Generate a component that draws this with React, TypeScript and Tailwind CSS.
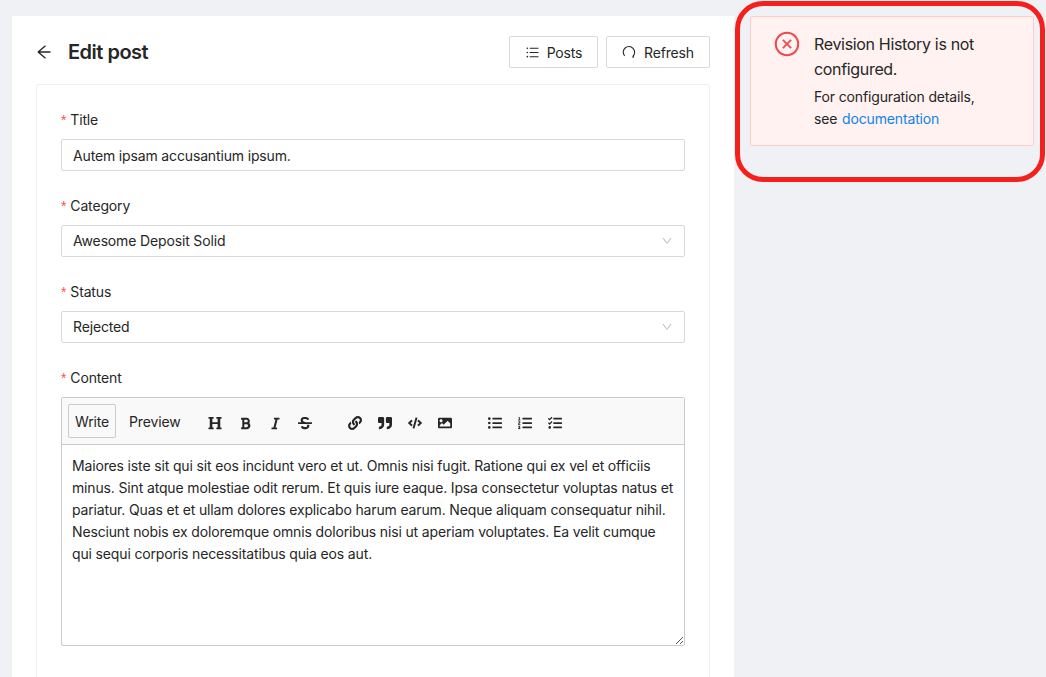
import { AiOutlineArrowLeft, AiOutlineUnorderedList, AiOutlineDown, AiOutlineCloseCircle } from "react-icons/ai";
import { FaHeading, FaBold, FaItalic, FaStrikethrough, FaLink, FaQuoteRight, FaCode, FaImage, FaListUl, FaListOl, FaTasks } from "react-icons/fa";

function Label({ text }: { text: string }) {
  return (
    <div className="h-[22px] mb-2 flex items-center text-[14px] leading-[22px] text-[#262626]">
      <span className="text-[#ff4d4f] mr-1 font-['Liberation_Sans'] text-[14px]">*</span>
      {text}
    </div>
  );
}

function Select({ value }: { value: string }) {
  return (
    <div className="h-8 border border-[#d9d9d9] rounded-[2px] pl-[11px] pr-[11px] flex items-center justify-between text-[14px] text-[#262626] mb-6">
      <span className="-mt-px">{value}</span>
      <AiOutlineDown className="text-[12px] text-[#bfbfbf]" />
    </div>
  );
}

function Tool({ children, className = "" }: { children: React.ReactNode; className?: string }) {
  return <span className={`w-[30px] flex items-center justify-center text-[#262626] ${className}`}>{children}</span>;
}

export default function App() {
  return (
    <div className="relative h-[677px] w-[1046px] overflow-hidden bg-[#f0f1f5] font-['Inter',sans-serif] tracking-[-0.15px] flex items-start pl-3 pt-4">
      <main className="w-[722px] h-[661px] bg-white px-6 pt-5 shrink-0">
        <header className="h-8 flex items-center justify-between mb-4">
          <div className="flex items-center">
            <AiOutlineArrowLeft className="text-[18px] text-[#262626] -ml-px mr-[15px]" />
            <h1 className="text-[20px] leading-8 font-semibold text-[#262626] tracking-[-0.5px]">Edit post</h1>
          </div>
          <div className="flex gap-2">
            <button className="h-8 w-[89px] border border-[#d9d9d9] rounded-[2px] flex items-center justify-center gap-[7px] text-[14px] text-[#262626]">
              <AiOutlineUnorderedList className="text-[15px]" />
              Posts
            </button>
            <button className="h-8 w-[104px] border border-[#d9d9d9] rounded-[2px] flex items-center justify-center gap-2 text-[14px] text-[#262626]">
              <svg width="14" height="14" viewBox="0 0 14 14" fill="none">
                <path d="M2.6 10.9 A 5.7 5.7 0 1 1 11 11.2" stroke="#262626" strokeWidth="1.1" />
                <path d="M9.6 12.4 L12.2 12.6 L11.6 10.2 Z" fill="#262626" />
              </svg>
              Refresh
            </button>
          </div>
        </header>
        <section className="h-[700px] border border-[#f0f0f0] rounded-[2px] p-6">
          <Label text="Title" />
          <div className="h-8 border border-[#d9d9d9] rounded-[2px] px-[11px] flex items-center text-[14px] text-[#262626] mb-6">
            Autem ipsam accusantium ipsum.
          </div>
          <Label text="Category" />
          <Select value="Awesome Deposit Solid" />
          <Label text="Status" />
          <Select value="Rejected" />
          <Label text="Content" />
          <div className="border border-[#c8ccd0] rounded-[2px]">
            <div className="h-[47px] bg-[#f9f9f9] border-b border-[#c8ccd0] flex items-center pl-[6px] text-[14px] text-[#262626]">
              <span className="h-[34px] w-[48px] border border-[#c8ccd0] rounded-[2px] flex items-center justify-center">Write</span>
              <span className="ml-[13px] w-[52px]">Preview</span>
              <div className="ml-[19px] flex items-center pt-[4px]">
                <Tool><FaHeading className="text-[14px]" /></Tool>
                <Tool><FaBold className="text-[13px]" /></Tool>
                <Tool><FaItalic className="text-[13px]" /></Tool>
                <Tool><FaStrikethrough className="text-[14px]" /></Tool>
              </div>
              <div className="ml-[20px] flex items-center pt-[4px]">
                <Tool><FaLink className="text-[14px]" /></Tool>
                <Tool><FaQuoteRight className="text-[14px]" /></Tool>
                <Tool><FaCode className="text-[14px]" /></Tool>
                <Tool><FaImage className="text-[14px]" /></Tool>
              </div>
              <div className="ml-[20px] flex items-center pt-[4px]">
                <Tool><FaListUl className="text-[14px]" /></Tool>
                <Tool><FaListOl className="text-[14px]" /></Tool>
                <Tool><FaTasks className="text-[14px]" /></Tool>
              </div>
            </div>
            <div className="relative h-[200px] px-[10px] py-[10px] text-[14px] leading-[22px] text-[#262626]">
              Maiores iste sit qui sit eos incidunt vero et ut. Omnis nisi fugit. Ratione qui ex vel et officiis minus. Sint atque molestiae odit rerum. Et quis iure eaque. Ipsa consectetur voluptas natus et pariatur. Quas et et ullam dolores explicabo harum earum. Neque aliquam consequatur nihil. Nesciunt nobis ex doloremque omnis doloribus nisi ut aperiam voluptates. Ea velit cumque qui sequi corporis necessitatibus quia eos aut.
              <svg className="absolute right-0 bottom-0" width="9" height="9" viewBox="0 0 9 9">
                <path d="M1 8 L8 1 M5 8 L8 5" stroke="#555" strokeWidth="1" fill="none" />
              </svg>
            </div>
          </div>
        </section>
      </main>
      <aside className="ml-4 w-[284px] h-[130px] shrink-0 bg-[#fff2f0] border border-[#ffccc7] rounded-[2px] flex pl-[22px] pt-[13px] pr-4">
        <AiOutlineCloseCircle className="text-[28px] text-[#f0484b] shrink-0" />
        <div className="ml-[13px] pt-[2px]">
          <p className="text-[16px] leading-[25px] text-[#262626] tracking-[-0.33px]">Revision History is not configured.</p>
          <p className="text-[14px] leading-[22px] text-[#262626] mt-[4px]">
            For configuration details,
            <br />
            see <span className="text-[#1084e8] ml-[1px]">documentation</span>
          </p>
        </div>
      </aside>
      <div className="absolute left-[735px] top-px w-[310px] h-[181px] border-[5px] border-[#f5201e] rounded-[28px] pointer-events-none" />
    </div>
  );
}
